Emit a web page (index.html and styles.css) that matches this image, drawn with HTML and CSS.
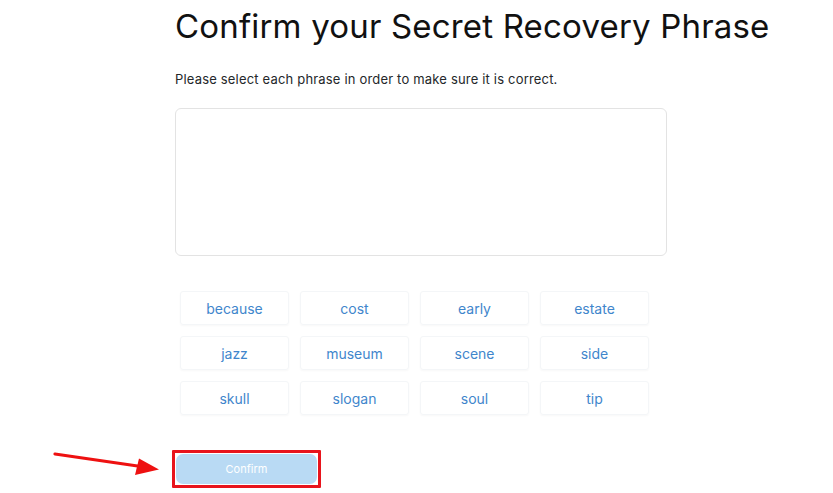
FILE: index.html
```html
<!DOCTYPE html>
<html>
<head>
<meta charset="utf-8">
<link rel="stylesheet" href="styles.css">
</head>
<body>
<main class="page">
  <h1 class="title">Confirm your Secret Recovery Phrase</h1>
  <p class="subtitle">Please select each phrase in order to make sure it is correct.</p>
  <div class="dropbox"></div>
  <div class="chips">
    <div class="chip">because</div>
    <div class="chip">cost</div>
    <div class="chip">early</div>
    <div class="chip">estate</div>
    <div class="chip">jazz</div>
    <div class="chip">museum</div>
    <div class="chip">scene</div>
    <div class="chip">side</div>
    <div class="chip">skull</div>
    <div class="chip">slogan</div>
    <div class="chip">soul</div>
    <div class="chip">tip</div>
  </div>
  <div class="action">
    <svg class="arrow" width="115" height="30" viewBox="0 0 115 30">
      <line x1="2" y1="4" x2="88" y2="16.5" stroke="#ee1111" stroke-width="3.2" stroke-linecap="round"/>
      <polygon points="106,19.5 82,25 86,8.5" fill="#ee1111"/>
    </svg>
    <div class="highlight">
      <button class="confirm">Confirm</button>
    </div>
  </div>
</main>
</body>
</html>
```
FILE: styles.css
```css
html, body {
  margin: 0;
  padding: 0;
  background: #ffffff;
}
.page {
  position: relative;
  padding: 6px 0 0 175px;
  font-family: "Inter", "Open Sans", sans-serif;
  color: #24272a;
}
.title {
  margin: 0;
  font-size: 33px;
  font-weight: 400;
  line-height: 40px;
  letter-spacing: 0.18px;
  color: #111111;
}
.subtitle {
  margin: 24px 0 0 0;
  font-size: 13px;
  line-height: 18px;
  letter-spacing: 0.18px;
  color: #24272a;
}
.dropbox {
  margin-top: 20px;
  width: 490px;
  height: 146px;
  border: 1px solid #e3e3e3;
  border-radius: 6px;
}
.chips {
  margin: 35px 0 0 5px;
  display: grid;
  grid-template-columns: repeat(4, 109px);
  column-gap: 11px;
  row-gap: 11px;
}
.chip {
  height: 34px;
  display: flex;
  align-items: center;
  justify-content: center;
  border: 1px solid #f4f6f8;
  border-radius: 3px;
  box-shadow: 0 1px 2px rgba(0, 0, 0, 0.03);
  box-sizing: border-box;
  font-size: 14px;
  color: #3f86cc;
}
.action {
  margin-top: 35px;
  margin-left: -3px;
}
.highlight {
  width: 141px;
  height: 30px;
  padding: 1px;
  border: 3px solid #e8141c;
  border-radius: 1px;
}
.confirm {
  display: block;
  width: 100%;
  height: 100%;
  border: none;
  border-radius: 7px;
  background: #b9daf4;
  color: #ffffff;
  font-family: "Inter", "Open Sans", sans-serif;
  font-size: 11px;
  padding: 0;
}
.arrow {
  position: absolute;
  left: 53px;
  top: 450px;
}
```
